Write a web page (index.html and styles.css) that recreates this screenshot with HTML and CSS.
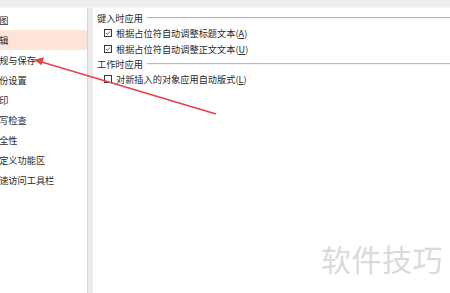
FILE: index.html
```html
<!DOCTYPE html>
<html>

<head>
    <meta charset="UTF-8">
    <meta name="viewport" content="width=device-width, initial-scale=1.0">
    <title>选项</title>
    <link rel="stylesheet" href="styles.css">
</head>

<body>
    <div class="topbar"></div>

    <div class="main">
        <!-- 左侧分类列表 -->
        <div class="sidebar">
            <div class="item"><span>视图</span></div>
            <div class="item selected"><span>编辑</span></div>
            <div class="item"><span>常规与保存</span></div>
            <div class="item"><span>备份设置</span></div>
            <div class="item"><span>打印</span></div>
            <div class="item"><span>拼写检查</span></div>
            <div class="item"><span>安全性</span></div>
            <div class="item"><span>自定义功能区</span></div>
            <div class="item"><span>快速访问工具栏</span></div>
        </div>

        <div class="divider"></div>

        <!-- 右侧设置内容 -->
        <div class="panel">
            <div class="section-title"><span>键入时应用</span><i class="rule"></i></div>
            <div class="option">
                <span class="box checked"><svg viewBox="0 0 8 8"><path d="M1.3 4.1 L3.2 6 L6.8 1.8" /></svg></span>
                <span>根据占位符自动调整标题文本(<u>A</u>)</span>
            </div>
            <div class="option">
                <span class="box checked"><svg viewBox="0 0 8 8"><path d="M1.3 4.1 L3.2 6 L6.8 1.8" /></svg></span>
                <span>根据占位符自动调整正文文本(<u>U</u>)</span>
            </div>

            <div class="section-title"><span>工作时应用</span><i class="rule"></i></div>
            <div class="option">
                <span class="box"></span>
                <span>对新插入的对象应用自动版式(<u>L</u>)</span>
            </div>
        </div>
    </div>

    <!-- 标注箭头 -->
    <svg class="arrow" width="450" height="293" viewBox="0 0 450 293">
        <line x1="216" y1="114" x2="40" y2="61.5" />
        <polygon points="34,59.8 44,57.2 41.6,65.2" />
    </svg>

    <div class="watermark">软件技巧</div>
</body>

</html>
```

FILE: styles.css
```css
* {
    margin: 0;
    padding: 0;
    box-sizing: border-box;
}

body {
    font-family: 'Noto Sans CJK SC', 'Noto Sans', sans-serif;
    font-size: 9.2px;
    color: #2a2a2a;
    background-color: #fff;
    width: 450px;
    height: 293px;
    overflow: hidden;
    position: relative;
}

.topbar {
    height: 8px;
    background-color: #eeeeee;
    border-bottom: 1px solid #f6f6f6;
}

.main {
    display: flex;
    height: 285px;
}

.sidebar {
    width: 87px;
    padding-top: 2px;
    overflow: hidden;
}

.item {
    height: 20px;
    line-height: 20px;
    white-space: nowrap;
    overflow: hidden;
}

.item span {
    display: block;
    margin-left: -10px;
}

.item.selected {
    background-color: #fde4d9;
}

.divider {
    width: 6px;
    background-color: #ececec;
    border-left: 1px solid #d6d6d6;
}

.panel {
    flex: 1;
    padding-top: 3px;
    padding-left: 4px;
}

.section-title {
    display: flex;
    align-items: center;
    height: 14px;
    gap: 4px;
}

.rule {
    flex: 1;
    height: 2px;
    border-top: 1px solid #b8b8b8;
    border-bottom: 1px solid #f4f4f4;
}

.option {
    display: flex;
    align-items: center;
    height: 16px;
    padding-left: 7px;
    gap: 4px;
}

.option u {
    text-decoration: underline;
    text-underline-offset: 1px;
}

.box {
    width: 8px;
    height: 8px;
    border: 1px solid #3a3a3a;
    background-color: #fff;
    display: flex;
}

.box svg {
    width: 100%;
    height: 100%;
}

.box path {
    fill: none;
    stroke: #222;
    stroke-width: 0.9;
}

.arrow {
    position: absolute;
    left: 0;
    top: 0;
    pointer-events: none;
}

.arrow line {
    stroke: #e5414b;
    stroke-width: 1.6;
}

.arrow polygon {
    fill: #e5414b;
}

.watermark {
    position: absolute;
    left: 321px;
    top: 241px;
    font-size: 30px;
    line-height: 34px;
    color: #dadada;
    letter-spacing: 0.5px;
}
```
